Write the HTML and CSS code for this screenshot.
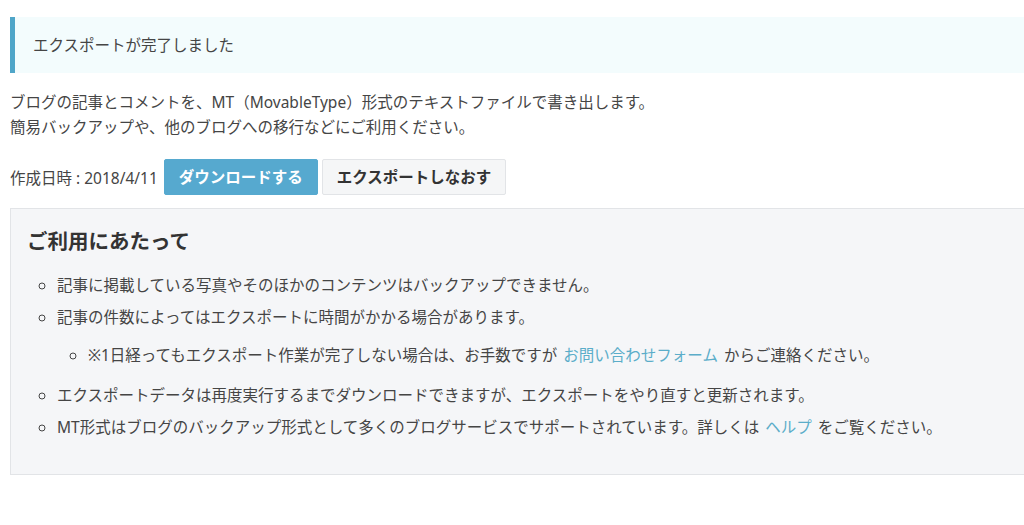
FILE: index.html
```html
<!DOCTYPE html>
<html lang="ja">
<head>
    <meta charset="UTF-8" />
    <meta name="viewport" content="width=device-width, initial-scale=1.0" />
    <title>エクスポート</title>
    <link rel="stylesheet" href="styles.css">
</head>
<body>

<div class="page">
    <div class="alert">エクスポートが完了しました</div>

    <p class="lead">
        ブログの記事とコメントを、MT（MovableType）形式のテキストファイルで書き出します。<br>
        簡易バックアップや、他のブログへの移行などにご利用ください。
    </p>

    <div class="export-row">
        <span class="created">作成日時 : 2018/4/11</span>
        <button class="btn btn-primary">ダウンロードする</button>
        <button class="btn btn-default">エクスポートしなおす</button>
    </div>

    <div class="notice">
        <h2>ご利用にあたって</h2>
        <ul class="notice-list">
            <li>記事に掲載している写真やそのほかのコンテンツはバックアップできません。</li>
            <li>記事の件数によってはエクスポートに時間がかかる場合があります。
                <ul class="sub-list">
                    <li>※1日経ってもエクスポート作業が完了しない場合は、お手数ですが <a href="#">お問い合わせフォーム</a> からご連絡ください。</li>
                </ul>
            </li>
            <li>エクスポートデータは再度実行するまでダウンロードできますが、エクスポートをやり直すと更新されます。</li>
            <li>MT形式はブログのバックアップ形式として多くのブログサービスでサポートされています。詳しくは <a href="#">ヘルプ</a> をご覧ください。</li>
        </ul>
    </div>
</div>

</body>
</html>
```

FILE: styles.css
```css
/* General */
html, body {
    overflow-x: hidden;
}

body {
    margin: 0;
    background: #ffffff;
    color: #454545;
    font-family: "Noto Sans", "Noto Sans CJK JP", sans-serif;
    font-size: 15.5px;
}

.page {
    width: 1040px;
    padding: 17px 0 0 10px;
}

a {
    color: #5badc9;
    text-decoration: none;
    margin: 0 2px;
}

/* Alert */
.alert {
    background: #f3fcfd;
    border-left: 5px solid #4fa5c8;
    padding: 17px 0 17px 18px;
    line-height: 22px;
}

/* Lead text */
.lead {
    margin: 17px 0 0;
    line-height: 25px;
}

/* Export row */
.export-row {
    margin-top: 19px;
    display: flex;
    align-items: center;
    gap: 4px;
}

.created {
    margin-right: 2px;
}

.btn {
    font-family: inherit;
    font-size: 15.5px;
    font-weight: bold;
    line-height: 22px;
    padding: 6px 14px;
    border-radius: 2px;
    cursor: pointer;
}

.btn-primary {
    background: #56a9cf;
    border: 1px solid #56a9cf;
    color: #ffffff;
}

.btn-default {
    background: #f5f6f7;
    border: 1px solid #e2e4e7;
    color: #333;
}

/* Notice box */
.notice {
    margin-top: 13px;
    background: #f5f6f8;
    border: 1px solid #e2e4e7;
    padding: 18px 16px 35px;
}

.notice h2 {
    margin: 0;
    font-size: 20.5px;
    line-height: 28px;
    color: #333;
    font-weight: bold;
}

.notice-list {
    list-style: circle;
    margin: 18px 0 0;
    padding-left: 30px;
}

.notice-list li {
    line-height: 24px;
    margin-bottom: 8px;
}

.notice-list li:last-child {
    margin-bottom: 0;
}

.sub-list {
    list-style: circle;
    margin: 14px 0 16px;
    padding-left: 31px;
}
```
